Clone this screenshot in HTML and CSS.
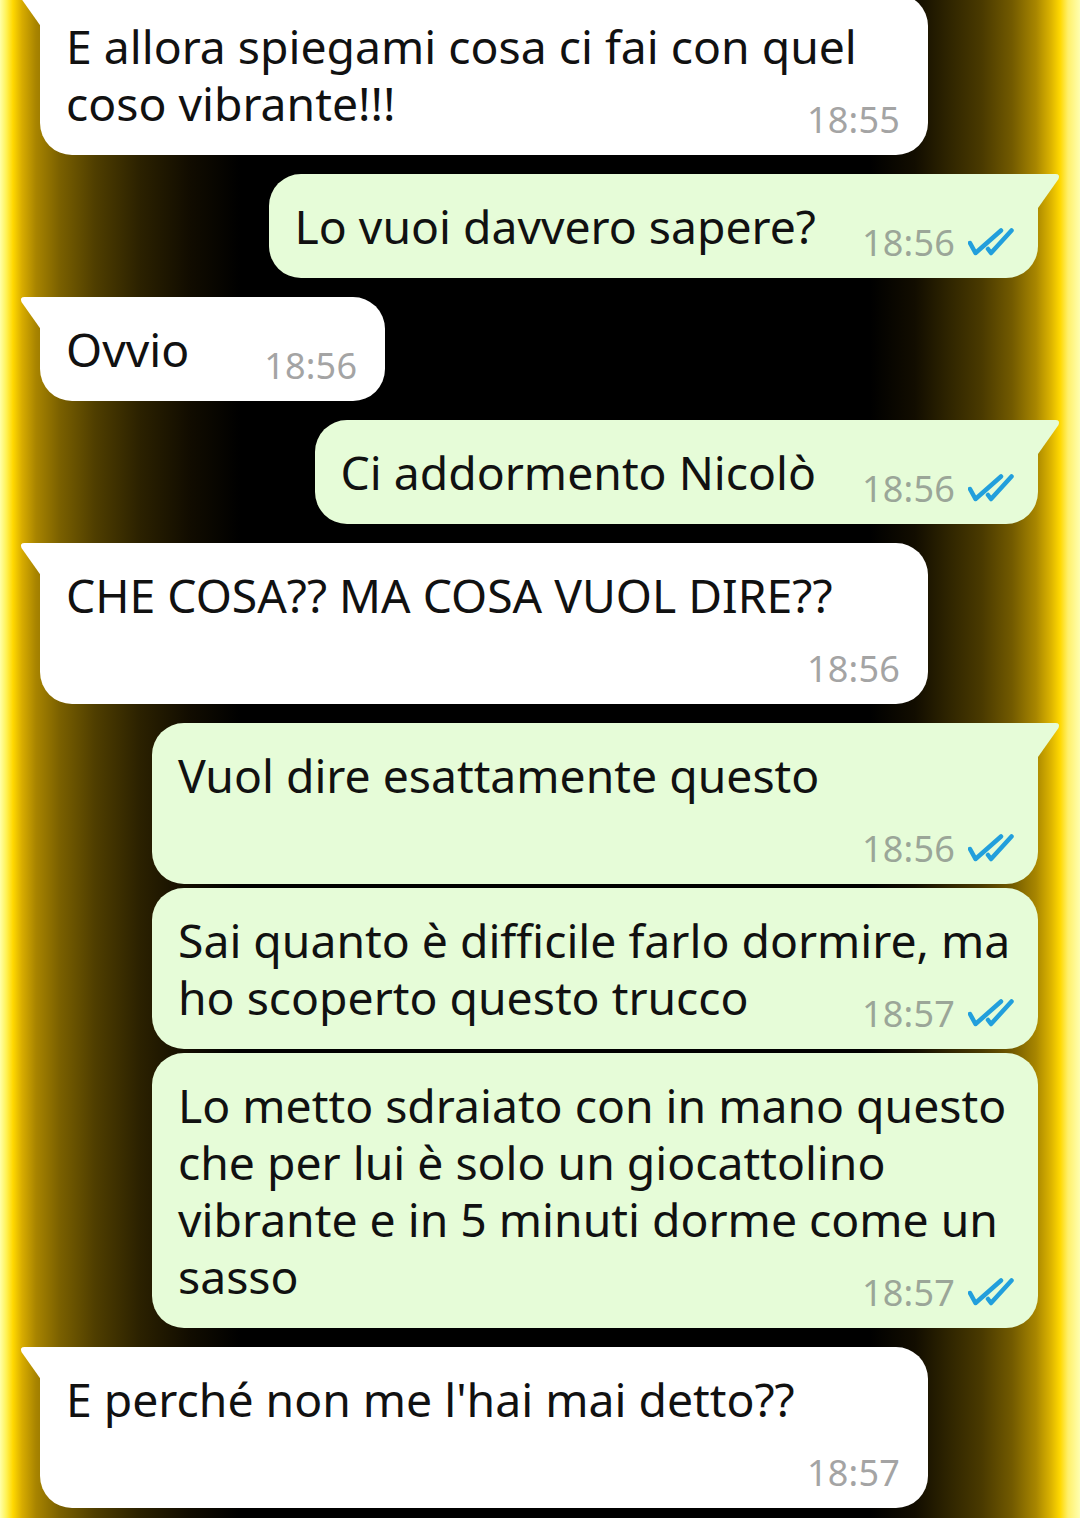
FILE: index.html
```html
<!DOCTYPE html>
<html lang="it">
<head>
<meta charset="utf-8">
<title>Chat</title>
<link rel="stylesheet" href="styles.css">
</head>
<body>
<main class="chat">
  <div class="bubble in tail wide-in group-start">
    E allora spiegami cosa ci fai con quel<br>coso vibrante!!!<span class="meta"><span class="time">18:55</span></span>
  </div>

  <div class="bubble out tail group-start">
    Lo vuoi davvero sapere?<span class="meta"><span class="time">18:56</span><svg class="ticks" viewBox="0 0 46 30" width="46" height="30"><path d="M2 15 L7.5 25 L33 2.5 M20 21 L23 25 L43.5 2.5"/></svg></span>
  </div>

  <div class="bubble in tail group-start">
    Ovvio<span class="meta meta-wide"><span class="time">18:56</span></span>
  </div>

  <div class="bubble out tail group-start">
    Ci addormento Nicolò<span class="meta"><span class="time">18:56</span><svg class="ticks" viewBox="0 0 46 30" width="46" height="30"><path d="M2 15 L7.5 25 L33 2.5 M20 21 L23 25 L43.5 2.5"/></svg></span>
  </div>

  <div class="bubble in tail wide-in group-start">
    CHE COSA?? MA COSA VUOL DIRE??<span class="meta stack"><span class="time">18:56</span></span>
  </div>

  <div class="bubble out tail wide-out group-start">
    Vuol dire esattamente questo<span class="meta stack"><span class="time">18:56</span><svg class="ticks" viewBox="0 0 46 30" width="46" height="30"><path d="M2 15 L7.5 25 L33 2.5 M20 21 L23 25 L43.5 2.5"/></svg></span>
  </div>

  <div class="bubble out wide-out">
    Sai quanto è difficile farlo dormire, ma<br>ho scoperto questo trucco<span class="meta"><span class="time">18:57</span><svg class="ticks" viewBox="0 0 46 30" width="46" height="30"><path d="M2 15 L7.5 25 L33 2.5 M20 21 L23 25 L43.5 2.5"/></svg></span>
  </div>

  <div class="bubble out wide-out">
    Lo metto sdraiato con in mano questo<br>che per lui è solo un giocattolino<br>vibrante e in 5 minuti dorme come un<br>sasso<span class="meta"><span class="time">18:57</span><svg class="ticks" viewBox="0 0 46 30" width="46" height="30"><path d="M2 15 L7.5 25 L33 2.5 M20 21 L23 25 L43.5 2.5"/></svg></span>
  </div>

  <div class="bubble in tail wide-in group-start">
    E perché non me l'hai mai detto??<span class="meta stack"><span class="time">18:57</span></span>
  </div>
</main>
</body>
</html>
```

FILE: styles.css
```css
html, body {
  margin: 0;
  padding: 0;
}

html {
  height: 1518px;
  overflow: hidden;
}

body {
  width: 1080px;
  height: 1518px;
  overflow: hidden;
  font-family: "Noto Sans", "Open Sans", sans-serif;
  color: #111;
  background: linear-gradient(90deg,
    #ffffa8 0px, #fff35a 6px, #ffd800 13px, #d8ac00 22px, #a88400 36px,
    #7a6000 60px, #4f3e00 95px, #2b2100 140px, #110c00 190px, #000 240px,
    #000 870px, #120d00 915px, #2e2400 948px, #4a3a00 982px, #725a00 1012px,
    #a88600 1036px, #dcb400 1051px, #ffd800 1060px, #fff06a 1068px, #ffffb0 1080px);
}

.chat {
  display: flex;
  flex-direction: column;
  margin-top: -6px;
}

.bubble {
  position: relative;
  display: flow-root;
  box-sizing: border-box;
  width: fit-content;
  padding: 24px 24px 23px 26px;
  font-size: 46.3px;
  line-height: 57px;
  white-space: nowrap;
  border-radius: 32px;
  margin-top: 4px;
}

.bubble.group-start {
  margin-top: 19px;
}

.chat > .bubble:first-child {
  margin-top: 0;
}

.bubble.in {
  align-self: flex-start;
  margin-left: 40px;
  background: #ffffff;
  padding-right: 28px;
}

.bubble.out {
  align-self: flex-end;
  margin-right: 42px;
  background: #e6fcd8;
}

.bubble.in.tail {
  border-top-left-radius: 0;
}

.bubble.out.tail {
  border-top-right-radius: 0;
}

.bubble.in.tail::before {
  content: "";
  position: absolute;
  top: 0;
  left: -20px;
  width: 22px;
  height: 34px;
  background: #ffffff;
  clip-path: path('M4.5 0 H22 V34 L1.5 5 Q-0.5 0 4.5 0 Z');
}

.bubble.out.tail::before {
  content: "";
  position: absolute;
  top: 0;
  right: -22px;
  width: 24px;
  height: 34px;
  background: #e6fcd8;
  clip-path: path('M0 0 H19.5 Q24.5 0 22.5 5 L2 34 H0 Z');
}

.wide-in {
  width: 888px;
}

.wide-out {
  width: 886px;
}

.meta {
  float: right;
  display: flex;
  align-items: center;
  height: 24px;
  margin-top: 33px;
  margin-left: 46px;
}

.meta-wide {
  margin-left: 75px;
}

.meta.stack {
  float: none;
  justify-content: flex-end;
  margin-left: 0;
}

.time {
  font-size: 36px;
  line-height: 24px;
  color: #a4a4a4;
  letter-spacing: 0.2px;
}

.out .time {
  color: #9ba698;
}

.ticks {
  margin-left: 13px;
  margin-right: 0;
  flex: none;
}

.ticks path {
  fill: none;
  stroke: #229fdc;
  stroke-width: 4.5;
  stroke-linecap: round;
  stroke-linejoin: round;
}
```
